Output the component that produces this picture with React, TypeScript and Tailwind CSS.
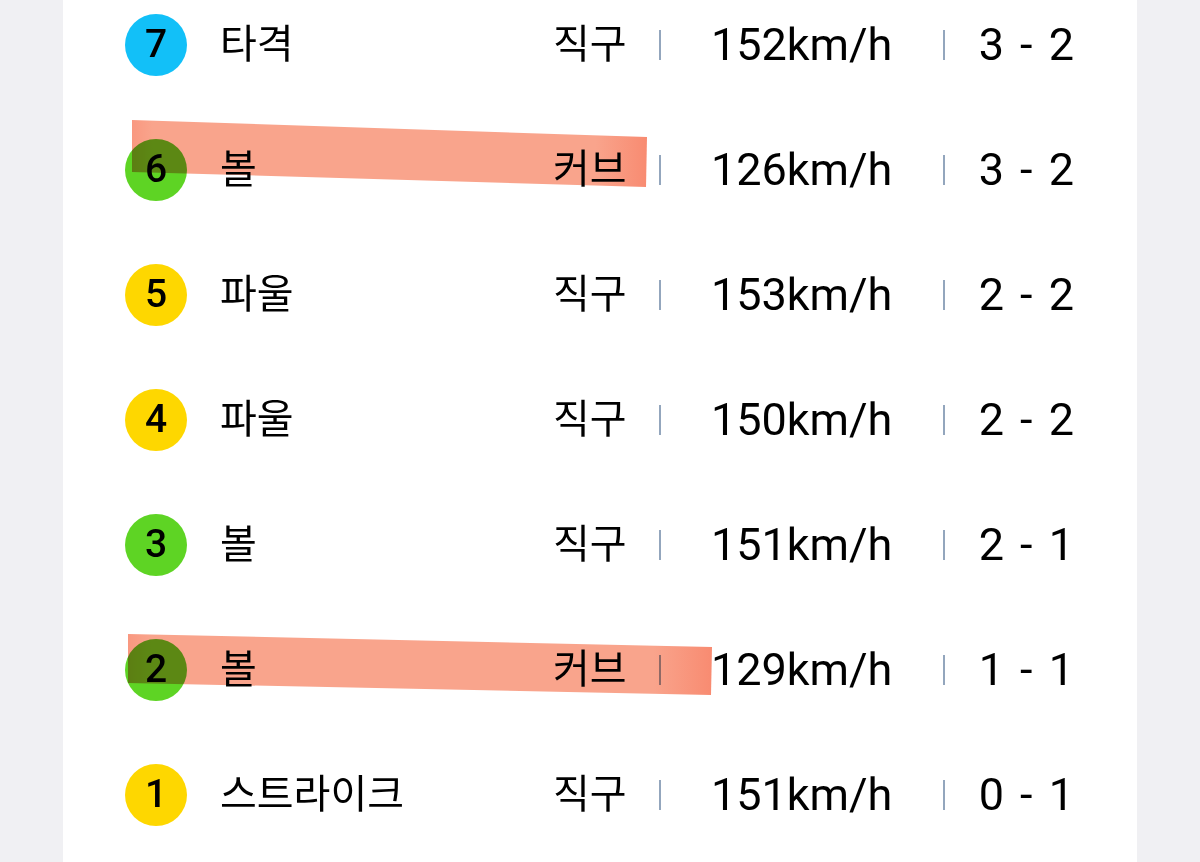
const PITCHES = [
  { n: 7, result: "타격", type: "직구", speed: "152km/h", count: "3 - 2", dot: "bg-[#12c0f8]" },
  { n: 6, result: "볼", type: "커브", speed: "126km/h", count: "3 - 2", dot: "bg-[#5ed424]" },
  { n: 5, result: "파울", type: "직구", speed: "153km/h", count: "2 - 2", dot: "bg-[#fed700]" },
  { n: 4, result: "파울", type: "직구", speed: "150km/h", count: "2 - 2", dot: "bg-[#fed700]" },
  { n: 3, result: "볼", type: "직구", speed: "151km/h", count: "2 - 1", dot: "bg-[#5ed424]" },
  { n: 2, result: "볼", type: "커브", speed: "129km/h", count: "1 - 1", dot: "bg-[#5ed424]" },
  { n: 1, result: "스트라이크", type: "직구", speed: "151km/h", count: "0 - 1", dot: "bg-[#fed700]" },
];

function Divider() {
  return <div className="h-[30px] w-[2px] shrink-0 bg-[#93a6bd]" />;
}

function PitchRow({ p }: { p: (typeof PITCHES)[number] }) {
  return (
    <div className="flex h-[125px] items-center pl-[62px] pr-[63px]">
      <div
        className={`flex h-[62px] w-[62px] shrink-0 items-center justify-center rounded-full ${p.dot} text-[39px] font-medium leading-none text-black`}
      >
        {p.n}
      </div>
      <div className="ml-[33px] flex-1 text-[40px] leading-none text-black">{p.result}</div>
      <div className="mr-[32px] text-[40px] leading-none text-black">{p.type}</div>
      <Divider />
      <div className="w-[282px] shrink-0 text-center text-[45px] leading-none text-black">{p.speed}</div>
      <Divider />
      <div className="ml-[34px] whitespace-pre text-[45px] leading-none text-black [word-spacing:5px]">
        {p.count}
      </div>
    </div>
  );
}

export default function App() {
  return (
    <div className="relative min-h-screen overflow-hidden bg-[#f0f0f3] font-['Roboto','Noto_Sans_CJK_KR',sans-serif]">
      <div className="mx-[63px] mt-[-18px] bg-white pb-10">
        {PITCHES.map((p) => (
          <PitchRow key={p.n} p={p} />
        ))}
      </div>

      {/* highlighter marks drawn over the list */}
      <svg
        className="pointer-events-none absolute left-0 top-0 h-[862px] w-[1200px] mix-blend-multiply"
        viewBox="0 0 1200 862"
      >
        <defs>
          <linearGradient id="marker" x1="0" y1="0" x2="1" y2="0">
            <stop offset="0" stopColor="#f99880" />
            <stop offset="0.04" stopColor="#f9a48c" />
            <stop offset="0.9" stopColor="#f9a48c" />
            <stop offset="1" stopColor="#f88b71" />
          </linearGradient>
        </defs>
        <polygon points="132,120 647,137 646,187 132,172" fill="url(#marker)" />
        <polygon points="128,634 712,647 711,695 128,683" fill="url(#marker)" />
      </svg>
    </div>
  );
}
